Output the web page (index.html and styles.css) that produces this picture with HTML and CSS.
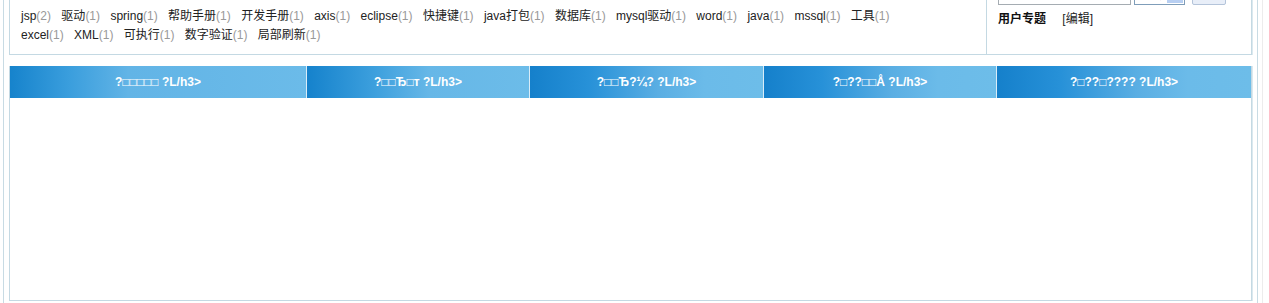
FILE: index.html
```html
<!DOCTYPE html>
<html lang="zh-CN">
<head>
    <meta charset="UTF-8">
    <title>标签</title>
    <link rel="stylesheet" href="styles.css">
</head>
<body>
    <div class="frame">
        <div class="page">
            <div class="top-box">
                <div class="tags">
                    <a>jsp<span>(2)</span></a>
                    <a>驱动<span>(1)</span></a>
                    <a>spring<span>(1)</span></a>
                    <a>帮助手册<span>(1)</span></a>
                    <a>开发手册<span>(1)</span></a>
                    <a>axis<span>(1)</span></a>
                    <a>eclipse<span>(1)</span></a>
                    <a>快捷键<span>(1)</span></a>
                    <a>java打包<span>(1)</span></a>
                    <a>数据库<span>(1)</span></a>
                    <a>mysql驱动<span>(1)</span></a>
                    <a>word<span>(1)</span></a>
                    <a>java<span>(1)</span></a>
                    <a>mssql<span>(1)</span></a>
                    <a>工具<span>(1)</span></a>
                    <a>excel<span>(1)</span></a>
                    <a>XML<span>(1)</span></a>
                    <a>可执行<span>(1)</span></a>
                    <a>数字验证<span>(1)</span></a>
                    <a>局部刷新<span>(1)</span></a>
                </div>
                <div class="side">
                    <form class="search">
                        <input type="text" class="search-input">
                        <div class="search-select"><span>工具</span><i></i></div>
                        <button type="button" class="search-btn"></button>
                    </form>
                    <div class="topic">
                        <strong>用户专题</strong>
                        <a>[编辑]</a>
                    </div>
                </div>
            </div>

            <div class="list-box">
                <div class="list-head">
                    <div class="col c1">?□□□□□ ?L/h3&gt;</div>
                    <div class="col c2">?□□Ђ□т ?L/h3&gt;</div>
                    <div class="col c3">?□□Ђ?¼? ?L/h3&gt;</div>
                    <div class="col c4">?□??□□Å ?L/h3&gt;</div>
                    <div class="col c5">?□??□???? ?L/h3&gt;</div>
                </div>
                <div class="list-body"></div>
            </div>
        </div>
    </div>
</body>
</html>
```
FILE: styles.css
```css
body {
    margin: 0;
    padding: 0;
    background-color: #fff;
    font-family: "Liberation Sans", Arial, "Noto Sans CJK SC", sans-serif;
    font-size: 12px;
    color: #222;
}

.frame {
    width: 1258px;
    padding-right: 4px;
    border-right: 1px solid #ececec;
}

.page {
    margin-top: -24px;
    margin-left: 3px;
    padding: 0 5px 3px 5px;
    border-left: 1px solid #c8dbe4;
    border-right: 1px solid #c8dbe4;
    height: 324px;
}

.top-box {
    display: flex;
    width: 1241px;
    border: 1px solid #c4d9e3;
    box-shadow: 1px 0 0 #dbe9ef;
}

.tags {
    flex: 1;
    padding: 30px 70px 9px 11px;
    line-height: 19px;
}

.tags a {
    margin-right: 7px;
    white-space: nowrap;
    color: #222;
}

.tags a span {
    color: #999;
}

.side {
    width: 253px;
    padding: 8px 0 0 11px;
    border-left: 1px solid #c4d9e3;
}

.search {
    display: flex;
    height: 20px;
    margin: 0;
}

.search-input {
    width: 133px;
    height: 20px;
    box-sizing: border-box;
    margin: 0 3px 0 0;
    padding: 0;
    border: 1px solid #a5acb2;
}

.search-select {
    display: flex;
    width: 51px;
    height: 20px;
    box-sizing: border-box;
    border: 1px solid #7f9db9;
    margin-right: 7px;
    padding: 1px;
}

.search-select span {
    flex: 1;
    line-height: 16px;
    padding-left: 2px;
    font-weight: bold;
}

.search-select i {
    width: 16px;
    background-color: #b8cff2;
}

.search-btn {
    width: 34px;
    height: 20px;
    border: 1px solid #b4c4da;
    border-radius: 2px;
    background-color: #e8eef8;
    padding: 0;
}

.topic {
    margin-top: 3px;
    line-height: 19px;
}

.topic strong {
    font-family: "Noto Sans CJK SC", sans-serif;
    font-size: 12px;
    margin-right: 13px;
    color: #111;
}

.topic a {
    color: #222;
}

.list-box {
    margin-top: 11px;
    width: 1241px;
    border: 1px solid #c4d9e3;
    border-top: 0;
    box-shadow: 1px 0 0 #dbe9ef;
}

.list-head {
    display: grid;
    grid-template-columns: 296px 222px 233px 232px 1fr;
    gap: 1px;
    background-color: #d9ecf8;
}

.col {
    height: 32px;
    line-height: 32px;
    text-align: center;
    color: #fff;
    font-weight: bold;
    font-size: 12px;
    white-space: nowrap;
    overflow: hidden;
    background: linear-gradient(to right, #1580cb 0%, #2791d8 25%, #5aaee3 55%, #6bbbe9 75%, #6dbde9 100%);
}

.c1 {
    background: linear-gradient(to right, #1683cc 0%, #3a9edd 20%, #62b4e6 40%, #6bbbe9 100%);
}

.c2 {
    background: linear-gradient(to right, #1582cc 0%, #3c9fdd 30%, #66b7e7 55%, #6cbce9 100%);
}

.list-body {
    height: 202px;
}
```
